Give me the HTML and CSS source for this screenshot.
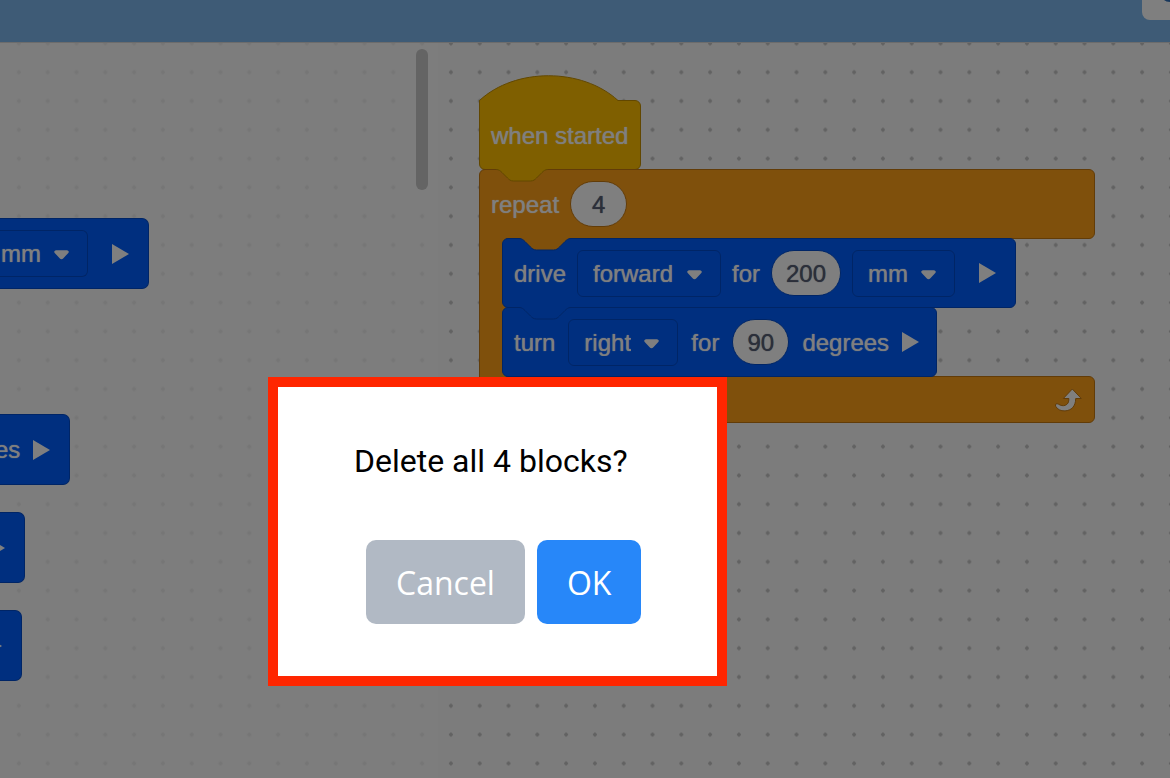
FILE: index.html
```
<!DOCTYPE html>
<html lang="en">
<head>
    <meta charset="UTF-8">
    <meta name="viewport" content="width=device-width, initial-scale=1.0">
    <title>Blocks</title>
    <link rel="stylesheet" href="styles.css">
</head>
<body>
    <div class="app">
        <header class="toolbar">
            <button class="toolbar-button" aria-label="Help">
                <svg width="28" height="20" viewBox="0 0 28 20"><path d="M22 0q2 2 6 2V0z" fill="#2f6fb8"/></svg>
            </button>
        </header>

        <main class="editor">
            <!-- Dotted grid -->
            <svg class="grid" width="100%" height="100%">
                <defs>
                    <pattern id="dots" x="8" y="14.8" width="28.8" height="28.8" patternUnits="userSpaceOnUse">
                        <path d="M8.9 14.4h4M10.9 12.4v4" stroke="#c4c4c4" stroke-width="2"/>
                    </pattern>
                </defs>
                <rect width="100%" height="100%" fill="url(#dots)"/>
            </svg>

            <!-- Block palette -->
            <aside class="palette">
                <div class="palette-block">
                    <span class="dropdown dropdown-cut">
                        <select aria-label="Distance units"><option>mm</option></select>
                        <svg class="arrow" viewBox="0 0 16 10"><path d="M2 0h12q3 1 1 3L10 8.5q-2 2-4 0L1 3Q-1 1 2 0z"/></svg>
                    </span>
                    <svg class="play play-far" viewBox="0 0 17 20"><path d="M0 0l17 10L0 20z"/></svg>
                </div>
                <div class="palette-block palette-space"></div>
                <div class="palette-block">
                    <span class="text-cut">es</span>
                    <svg class="play" viewBox="0 0 17 20"><path d="M0 0l17 10L0 20z"/></svg>
                </div>
                <div class="palette-block">
                    <svg class="play play-cut" viewBox="12 0 5 20"><path d="M0 0l17 10L0 20z"/></svg>
                </div>
                <div class="palette-block">
                    <svg class="play play-edge" viewBox="15 0 2 20"><path d="M0 0l17 10L0 20z"/></svg>
                </div>
                <div class="scrollbar"></div>
            </aside>

            <!-- Workspace -->
            <section class="workspace">
                <div class="stack">
                    <div class="block event">
                        <svg class="hat" viewBox="0 0 140 27">
                            <path d="M.5 27V25.5C36 -7.5 103 -7.5 139 25.5V27z" fill="#ffbf00"/>
                            <path d="M.5 27V25.5C36 -7.5 103 -7.5 139 25.5" fill="none" stroke="#c48f00"/>
                        </svg>
                        <span>when started</span>
                    </div>

                    <div class="loop">
                        <div class="block control loop-head">
                            <svg class="notch notch-event" viewBox="0 0 52 13"><path d="M0 0v.5c3 0 4.500 1.500 6 3l5.500 5.500c1.500 1.500 3 3 6 3h17c3 0 4.500-1.500 6-3L46 3.500c1.500-1.500 3-3 6-3V0"/></svg>
                            <label for="times">repeat</label>
                            <input id="times" class="number" type="text" value="4">
                        </div>
                        <div class="loop-body">
                            <div class="block motion">
                                <svg class="notch notch-control" viewBox="0 0 52 13"><path d="M0 0v.5c3 0 4.500 1.500 6 3l5.500 5.500c1.500 1.500 3 3 6 3h17c3 0 4.500-1.500 6-3L46 3.500c1.500-1.500 3-3 6-3V0"/></svg>
                                <label for="direction">drive</label>
                                <span class="dropdown">
                                    <select id="direction"><option>forward</option></select>
                                    <svg class="arrow" viewBox="0 0 16 10"><path d="M2 0h12q3 1 1 3L10 8.5q-2 2-4 0L1 3Q-1 1 2 0z"/></svg>
                                </span>
                                <label for="distance">for</label>
                                <input id="distance" class="number number-wide" type="text" value="200">
                                <span class="dropdown">
                                    <select aria-label="Units"><option>mm</option></select>
                                    <svg class="arrow" viewBox="0 0 16 10"><path d="M2 0h12q3 1 1 3L10 8.5q-2 2-4 0L1 3Q-1 1 2 0z"/></svg>
                                </span>
                                <svg class="play play-far" viewBox="0 0 17 20"><path d="M0 0l17 10L0 20z"/></svg>
                            </div>
                            <div class="block motion motion-turn">
                                <svg class="notch notch-motion" viewBox="0 0 52 13"><path d="M0 0v.5c3 0 4.500 1.500 6 3l5.500 5.500c1.500 1.500 3 3 6 3h17c3 0 4.500-1.500 6-3L46 3.500c1.500-1.500 3-3 6-3V0"/></svg>
                                <label for="turn">turn</label>
                                <span class="dropdown">
                                    <select id="turn"><option>right</option></select>
                                    <svg class="arrow" viewBox="0 0 16 10"><path d="M2 0h12q3 1 1 3L10 8.5q-2 2-4 0L1 3Q-1 1 2 0z"/></svg>
                                </span>
                                <label for="angle">for</label>
                                <input id="angle" class="number" type="text" value="90">
                                <span>degrees</span>
                                <svg class="play" viewBox="0 0 17 20"><path d="M0 0l17 10L0 20z"/></svg>
                            </div>
                        </div>
                        <div class="block control loop-foot">
                            <svg class="repeat" viewBox="0 0 30 26"><path d="M19.3 2l9 9.500h-5.600c0 8-4.500 12-10.700 12.400-4.500.2-7.500-1.600-9.300-4.600-1-2 .8-3.400 2.600-2.200 2.400 1.600 4.900 2 6.900 1.200 2.600-1 3.700-2.800 3.700-6.800H10.300z"/></svg>
                        </div>
                    </div>
                </div>
            </section>
        </main>
    </div>

    <div class="overlay"></div>
    <div class="dialog" role="dialog" aria-modal="true" aria-labelledby="dialog-text">
        <p id="dialog-text">Delete all 4 blocks?</p>
        <div class="dialog-buttons">
            <button class="cancel">Cancel</button>
            <button class="ok">OK</button>
        </div>
    </div>
</body>
</html>
```
FILE: styles.css
```
* {
    box-sizing: border-box;
}

body {
    margin: 0;
    font-family: "Liberation Sans", Arial, sans-serif;
    font-size: 24px;
    color: #fff;
    overflow: hidden;
}

.app {
    display: flex;
    flex-direction: column;
    height: 100vh;
    background-color: #f9f9f9;
    isolation: isolate;
}

.toolbar {
    display: flex;
    justify-content: flex-end;
    align-items: flex-start;
    height: 42px;
    background-color: #7cb6ec;
}

.toolbar-button {
    display: flex;
    padding: 0;
    border: none;
    border-radius: 0 0 0 8px;
    background-color: #fff;
    overflow: hidden;
}

.editor {
    position: relative;
    flex: 1;
    display: flex;
    min-height: 0;
    border-top: 1px solid #d8d8d8;
    overflow: hidden;
}

.grid {
    position: absolute;
    top: 0;
    left: 0;
}

/* Palette */
.palette {
    position: relative;
    display: flex;
    flex-direction: column;
    align-items: flex-start;
    gap: 27px;
    width: 438px;
    padding-top: 175px;
    background-color: rgba(249, 249, 249, 0.75);
    text-shadow: 0 0 1px #fff;
}

.palette-block {
    display: flex;
    align-items: center;
    gap: 11px;
    height: 71px;
    flex-shrink: 0;
    padding-right: 19px;
    background-color: #005fff;
    border: 1px solid #004bcc;
    border-left: none;
    border-radius: 0 7px 7px 0;
}

.palette-space {
    visibility: hidden;
}

.text-cut {
    margin-left: -5px;
}

.scrollbar {
    position: absolute;
    top: 6px;
    right: 10px;
    width: 12px;
    height: 141px;
    border-radius: 6px;
    background-color: #c8c8c8;
}

/* Blocks */
.workspace {
    position: relative;
    flex: 1;
}

.stack {
    position: absolute;
    top: 57px;
    left: 41px;
    white-space: nowrap;
    text-shadow: 0 0 1px #fff;
}

.block {
    position: relative;
    display: flex;
    align-items: center;
    gap: 11px;
    width: max-content;
    height: 70px;
    margin-bottom: -1px;
    padding: 0 19px 0 11px;
    border: 1px solid;
    border-radius: 6px;
}

.block label,
.block > span:not(.dropdown) {
    padding-top: 2px;
}

.event {
    padding-right: 12px;
    background-color: #ffbf00;
    border-color: #c48f00;
    border-top-left-radius: 0;
}

.control {
    background-color: #ffa019;
    border-color: #c47810;
}

.motion {
    background-color: #005fff;
    border-color: #004bcc;
}

.motion-turn {
    gap: 13px;
    padding-right: 17px;
}

.hat {
    position: absolute;
    top: -26px;
    left: -1px;
    width: 140px;
    height: 27px;
}

.notch {
    position: absolute;
    top: -1px;
    left: 16px;
    width: 52px;
    height: 13px;
}

.notch-event {
    fill: #ffbf00;
    stroke: #c48f00;
}

.notch-control {
    fill: #ffa019;
    stroke: #004bcc;
}

.notch-motion {
    fill: #005fff;
    stroke: #004bcc;
}

.loop {
    width: 616px;
}

.loop-head {
    width: 100%;
    border-bottom-left-radius: 0;
}

.loop-body {
    position: relative;
    z-index: 1;
    padding-left: 22px;
    border-left: 1px solid #c47810;
    background: linear-gradient(#ffa019, #ffa019) no-repeat left / 26px 100%;
}

.loop-foot {
    justify-content: flex-end;
    width: 100%;
    height: 47px;
    padding-right: 11px;
    border-top-left-radius: 0;
}

.number {
    width: 57px;
    height: 46px;
    padding: 2px 0 0;
    border: 1px solid #c47810;
    border-radius: 23px;
    background-color: #fff;
    color: #575e75;
    font: inherit;
    text-align: center;
    text-shadow: 0 0 1px #575e75;
}

.motion .number {
    border-color: #004bcc;
}

.motion .number-wide {
    width: 70px;
}

.dropdown {
    position: relative;
    display: flex;
    align-items: center;
}

.dropdown select {
    appearance: none;
    height: 47px;
    padding: 0 46px 0 15px;
    border: 1px solid #004bcc;
    border-radius: 6px;
    background-color: #005fff;
    color: #fff;
    font: inherit;
    text-shadow: inherit;
}

.dropdown-cut select {
    padding-left: 1px;
    border-left: none;
    border-radius: 0 6px 6px 0;
}

.arrow {
    position: absolute;
    top: 20px;
    right: 19px;
    width: 15px;
    height: 10px;
    fill: #fff;
    pointer-events: none;
}

.play {
    width: 17px;
    height: 20px;
    margin-left: 2px;
    fill: #fff;
}

.play-far {
    margin-left: 13px;
}

.motion-turn .play {
    margin-left: 0;
}

.play-cut {
    width: 5px;
    margin-left: 0;
}

.play-edge {
    width: 2px;
    margin-left: 0;
}

.repeat {
    width: 30px;
    height: 26px;
    fill: #fff;
    stroke: #c47810;
}

/* Confirm dialog */
.overlay {
    position: fixed;
    inset: 0;
    background-color: rgba(0, 0, 0, 0.5);
}

.dialog {
    position: fixed;
    top: 377px;
    left: 268px;
    padding: 54px 75px 52px 76px;
    border: 10px solid #ff2600;
    background-color: #fff;
    color: #000;
}

.dialog p {
    margin: 0 14px 59px 0;
    font-family: Roboto, sans-serif;
    font-size: 32px;
    line-height: 40px;
}

.dialog-buttons {
    display: flex;
    gap: 12px;
    padding-left: 12px;
}

.dialog-buttons button {
    height: 84px;
    padding: 0 30px;
    border: none;
    border-radius: 10px;
    color: #fff;
    font-family: "Open Sans", sans-serif;
    font-size: 32px;
    cursor: pointer;
}

.cancel {
    background-color: #b1b9c4;
}

.ok {
    background-color: #2787f9;
}
```
